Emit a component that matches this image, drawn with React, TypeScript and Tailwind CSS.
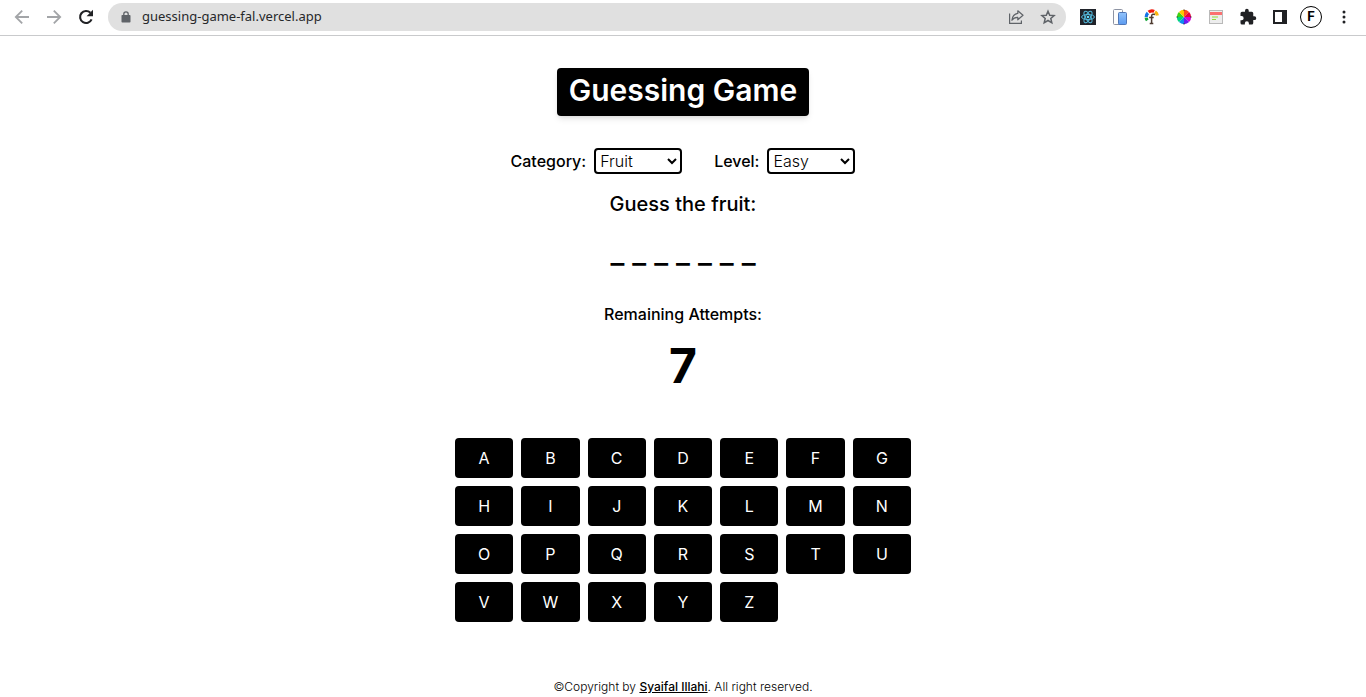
import { useState } from "react";

const LETTERS = "ABCDEFGHIJKLMNOPQRSTUVWXYZ".split("");

function BackIcon() {
  return (
    <svg width="16" height="16" viewBox="0 0 16 16" fill="none" stroke="#a3a5a8" strokeWidth="1.8">
      <path d="M15 8H2.2M8.2 1.6 1.8 8l6.4 6.4" />
    </svg>
  );
}

function ForwardIcon() {
  return (
    <svg width="16" height="16" viewBox="0 0 16 16" fill="none" stroke="#a3a5a8" strokeWidth="1.8">
      <path d="M1 8h12.8M7.8 1.6 14.2 8l-6.4 6.4" />
    </svg>
  );
}

function ReloadIcon() {
  return (
    <svg width="16" height="16" viewBox="0 0 16 16" fill="none">
      <path d="M13.6 10.4A6 6 0 1 1 12.4 3.8" stroke="#202124" strokeWidth="2.1" />
      <path d="M15 .8v6.4H8.6z" fill="#202124" />
    </svg>
  );
}

function LockIcon() {
  return (
    <svg width="10" height="12" viewBox="0 0 10 12">
      <rect x=".5" y="4" width="9" height="7.5" rx=".8" fill="#5f6368" />
      <path d="M2.800 4.500V3a2.200 2.200 0 0 1 4.400 0v1.500" fill="none" stroke="#5f6368" strokeWidth="1.300" />
    </svg>
  );
}

function ShareIcon() {
  return (
    <svg width="16" height="16" viewBox="0 0 16 16" fill="none" stroke="#5f6368" strokeWidth="1.2">
      <path d="M1.600 4.500v9.900h11.800v-3" />
      <path d="M9.800 1.800 15 6.300l-5.200 4.500V8.300C7 8.200 5.200 9.200 3.900 11.300 4.300 7.600 6.200 4.900 9.800 4.400z" strokeLinejoin="round" />
    </svg>
  );
}

function StarIcon() {
  return (
    <svg width="16" height="16" viewBox="0 0 16 16" fill="none" stroke="#5f6368" strokeWidth="1.5">
      <path d="m8 2.200 1.700 4 4.400.4-3.300 2.900 1 4.300L8 11.500l-3.800 2.300 1-4.300-3.300-2.900 4.400-.4z" />
    </svg>
  );
}

function ReactIcon() {
  return (
    <svg width="16" height="16" viewBox="0 0 16 16" fill="none" stroke="#53b9dc" strokeWidth="1">
      <rect width="16" height="16" fill="#20232a" stroke="none" />
      <ellipse cx="8" cy="8" rx="6.400" ry="2.600" />
      <ellipse cx="8" cy="8" rx="6.400" ry="2.600" transform="rotate(60 8 8)" />
      <ellipse cx="8" cy="8" rx="6.400" ry="2.600" transform="rotate(120 8 8)" />
      <circle cx="8" cy="8" r="1.300" fill="#61dafb" stroke="none" />
    </svg>
  );
}

function DevicesIcon() {
  return (
    <svg width="16" height="16" viewBox="0 0 16 16">
      <defs>
        <linearGradient id="device" x1="0" y1="0" x2="0" y2="1">
          <stop offset="0" stopColor="#93c4fb" />
          <stop offset="1" stopColor="#5b9af0" />
        </linearGradient>
      </defs>
      <rect x="1.500" y=".5" width="9" height="15" rx="1" fill="#fdfdfd" stroke="#8d93a3" />
      <rect x="6.500" y="3.500" width="8" height="12" rx="1" fill="url(#device)" stroke="#4f77b8" />
    </svg>
  );
}

function FontIcon() {
  return (
    <svg width="16" height="16" viewBox="0 0 16 16" fill="none">
      <g strokeWidth="3.200">
        <path d="M3.300 11.400A5.600 5.600 0 0 1 2.200 8.600" stroke="#18a83c" />
        <path d="M2.200 8A5.600 5.600 0 0 1 3.900 4" stroke="#1673e6" />
        <path d="M4.600 3.100a5.600 5.600 0 0 1 5.600-.7" stroke="#f01c0c" />
        <path d="M11 2.900a5.600 5.600 0 0 1 2.400 3.600" stroke="#fbb70c" />
      </g>
      <path d="M11 5.500C8.800 4.700 7.600 5.400 7.600 7.300v7.200M5.200 8.500h4.500M5.700 14.500h3.600" stroke="#4e3b30" strokeWidth="1.500" />
    </svg>
  );
}

function ColorWheelIcon() {
  return (
    <svg width="16" height="16" viewBox="0 0 16 16">
      <path d="M8 8V.8A7.200 7.200 0 0 1 13.100 2.900z" fill="#ff4a1c" />
      <path d="M8 8 13.100 2.900A7.200 7.200 0 0 1 15.200 8z" fill="#e8003d" />
      <path d="M8 8h7.200a7.200 7.200 0 0 1-2.100 5.100z" fill="#d400d8" />
      <path d="m8 8 5.100 5.100A7.200 7.200 0 0 1 8 15.200z" fill="#6a1bf0" />
      <path d="M8 8v7.200a7.200 7.200 0 0 1-5.100-2.100z" fill="#0c8cf0" />
      <path d="m8 8-5.100 5.100A7.200 7.200 0 0 1 .8 8z" fill="#00d57c" />
      <path d="M8 8H.8a7.200 7.200 0 0 1 2.100-5.100z" fill="#3ed313" />
      <path d="M8 8 2.900 2.900A7.200 7.200 0 0 1 8 .8z" fill="#ffc800" />
      <path d="M8 .5v1.300M8 14.200v1.300M.5 8h1.300M14.200 8h1.300" stroke="#333" />
    </svg>
  );
}

function PageIcon() {
  return (
    <svg width="16" height="16" viewBox="0 0 16 16">
      <rect x="1.500" y="1.500" width="13" height="13" fill="#ededed" stroke="#b9b9b9" />
      <path d="M2 3h12v3H2z" fill="#fb7070" />
      <path d="M4 8h6M4 10.500h4" stroke="#93dc3c" strokeWidth="1.200" />
    </svg>
  );
}

function PuzzleIcon() {
  return (
    <svg width="18" height="18" viewBox="0 0 24 24" fill="#202124">
      <path d="M20.500 11H19V7a2 2 0 0 0-2-2h-4V3.500a2.500 2.500 0 0 0-5 0V5H4a2 2 0 0 0-2 2v3.800h1.500a2.700 2.700 0 0 1 0 5.400H2V20a2 2 0 0 0 2 2h3.800v-1.500a2.700 2.700 0 0 1 5.400 0V22H17a2 2 0 0 0 2-2v-4h1.500a2.500 2.500 0 0 0 0-5z" />
    </svg>
  );
}

function SidePanelIcon() {
  return (
    <svg width="16" height="16" viewBox="0 0 16 16">
      <path d="M1 1h14v14H1zM3 3v10h7V3z" fill="#202124" fillRule="evenodd" />
    </svg>
  );
}

function MenuIcon() {
  return (
    <svg width="16" height="16" viewBox="0 0 16 16" fill="#202124">
      <circle cx="8" cy="3" r="1.500" />
      <circle cx="8" cy="8" r="1.500" />
      <circle cx="8" cy="13" r="1.500" />
    </svg>
  );
}

function BrowserBar() {
  return (
    <header className="flex h-9 items-center border-b border-[#c9cacc] bg-white pr-3.5 pb-px pl-3.5">
      <div className="flex gap-4">
        <button type="button" aria-label="Back"><BackIcon /></button>
        <button type="button" aria-label="Forward"><ForwardIcon /></button>
        <button type="button" aria-label="Reload"><ReloadIcon /></button>
      </div>
      <div className="ml-3.5 flex h-7 flex-1 items-center rounded-full bg-[#e0e0e0] pr-2.5 pl-3">
        <span className="mr-2 flex w-3 justify-center"><LockIcon /></span>
        <input
          aria-label="Address"
          defaultValue="guessing-game-fal.vercel.app"
          className="ml-0.5 min-w-0 flex-1 bg-transparent font-['Noto_Sans',sans-serif] text-[13px] text-[#26282b] outline-none"
        />
        <div className="flex gap-4">
          <button type="button" aria-label="Share"><ShareIcon /></button>
          <button type="button" aria-label="Bookmark"><StarIcon /></button>
        </div>
      </div>
      <div className="ml-3.5 flex items-center gap-4">
        <button type="button" aria-label="React tools"><ReactIcon /></button>
        <button type="button" aria-label="Responsive view"><DevicesIcon /></button>
        <button type="button" aria-label="Fonts"><FontIcon /></button>
        <button type="button" aria-label="Color picker"><ColorWheelIcon /></button>
        <button type="button" aria-label="Page notes"><PageIcon /></button>
        <button type="button" aria-label="Extensions" className="flex w-4 justify-center">
          <span className="shrink-0"><PuzzleIcon /></span>
        </button>
        <button type="button" aria-label="Side panel"><SidePanelIcon /></button>
      </div>
      <button
        type="button"
        className="ml-3 flex size-[22px] items-center justify-center rounded-full border border-black text-[13px] font-bold text-black"
      >
        F
      </button>
      <button type="button" aria-label="Menu" className="ml-3.5"><MenuIcon /></button>
    </header>
  );
}

export default function App() {
  const [category, setCategory] = useState("Fruit");
  const [level, setLevel] = useState("Easy");

  return (
    <div className="flex min-h-screen flex-col bg-white font-['Inter',sans-serif] text-black [&_button]:cursor-pointer [&_svg]:block">
      <BrowserBar />
      <main className="flex flex-1 flex-col items-center px-4 pt-8">
        <h1 className="rounded bg-black px-3 pt-1 pb-2 text-3xl font-semibold text-white shadow-md">
          Guessing Game
        </h1>
        <div className="mt-8 flex flex-wrap items-center justify-center gap-8">
          <div className="flex items-center gap-2">
            <label htmlFor="category" className="font-medium">Category:</label>
            <select
              id="category"
              value={category}
              onChange={(e) => setCategory(e.target.value)}
              className="h-[26px] w-22 rounded border-2 border-black bg-white font-light"
            >
              <option>Fruit</option>
              <option>Animal</option>
            </select>
          </div>
          <div className="flex items-center gap-2">
            <label htmlFor="level" className="font-medium">Level:</label>
            <select
              id="level"
              value={level}
              onChange={(e) => setLevel(e.target.value)}
              className="h-[26px] w-22 rounded border-2 border-black bg-white font-light"
            >
              <option>Easy</option>
              <option>Medium</option>
              <option>Hard</option>
            </select>
          </div>
        </div>
        <h2 className="mt-4 text-xl font-medium">Guess the {category.toLowerCase()}:</h2>
        <p className="mt-4 text-3xl font-medium">_ _ _ _ _ _ _</p>
        <p className="mt-8 font-medium">Remaining Attempts:</p>
        <p className="mt-4 text-5xl leading-none font-bold">7</p>
        <div className="mt-12 grid w-full max-w-[456px] grid-cols-7 gap-2">
          {LETTERS.map((letter) => (
            <button key={letter} type="button" className="h-10 rounded bg-black text-white">
              {letter}
            </button>
          ))}
        </div>
      </main>
      <footer className="pt-8 pb-0.5 text-center text-xs font-light">
        ©Copyright by <a href="#author" className="font-medium underline">Syaifal Illahi</a>. All right reserved.
      </footer>
    </div>
  );
}
